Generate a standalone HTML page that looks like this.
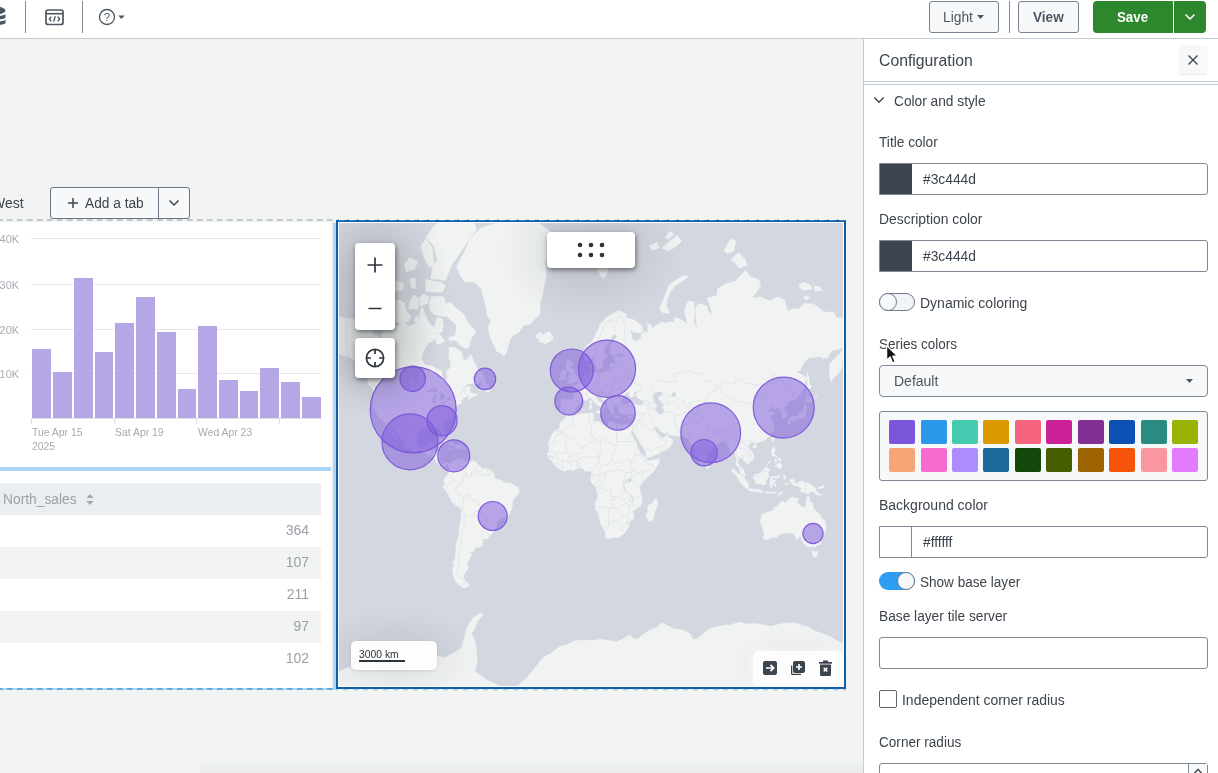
<!DOCTYPE html>
<html lang="en">
<head>
<meta charset="utf-8">
<title>Dashboard Studio - Configuration</title>
<style>
*{box-sizing:border-box;margin:0;padding:0}
html,body{width:1218px;height:773px;overflow:hidden;background:#f2f4f4;font-family:"Liberation Sans",Arial,sans-serif;color:#3c444d}
.abs{position:absolute}
#root{will-change:transform;position:relative;width:1218px;height:773px;overflow:hidden;background:#f2f4f4}
/* toolbar */
#toolbar{position:absolute;left:0;top:0;width:1218px;height:39px;background:#fff;border-bottom:1px solid #c3cbd4}
.vdiv{position:absolute;top:1px;width:1px;height:32px;background:#7f8a96}
.btn{position:absolute;top:1px;height:32px;border:1px solid #76828f;border-radius:3px;background:#f7f8fa;color:#3c444d;font-size:14px;line-height:30px;text-align:center;white-space:nowrap}
.t{position:absolute;white-space:nowrap;line-height:1;transform-origin:0 50%}
/* panel */
#panel{position:absolute;left:863px;top:39px;width:355px;height:734px;background:#fff;border-left:1px solid #c3cbd4}
.lbl{position:absolute;left:879px;font-size:14px;color:#3c444d;white-space:nowrap;line-height:16px;transform-origin:0 50%}
.inp{position:absolute;left:879px;width:329px;height:32px;border:1px solid #7d8997;border-radius:3px;background:#fff}
.inp.c{border-radius:0 3px 3px 0}
.inp .sw{position:absolute;left:0;top:0;width:32px;height:30px}
.inp .v{position:absolute;left:43px;top:0;line-height:30px;font-size:14px;color:#3c444d;transform-origin:0 50%;transform:scaleX(.985)}
.sws{position:absolute;width:26px;height:24px;border-radius:2px}
/* canvas */
.panelw{position:absolute;background:#fff}
.bar{position:absolute;background:#b5a7e6}
.grid{position:absolute;left:31px;width:290px;height:1px;background:#e6e8ea}
.ax{position:absolute;font-size:11.500px;transform:scaleX(.905);color:#a6abb0;white-space:nowrap;line-height:14px;transform-origin:0 50%}
.ay{position:absolute;left:-21px;width:40px;text-align:right;font-size:11.500px;color:#a6abb0;white-space:nowrap;line-height:14px;transform-origin:100% 50%;transform:scaleX(.95)}
.row{position:absolute;left:0;width:321px;height:32px}
.num{position:absolute;right:12px;top:-1px;line-height:32px;font-size:14px;color:#9ba0a6;transform-origin:100% 50%}
.ctl{position:absolute;background:#fff;border-radius:4px;box-shadow:1px 2px 4px rgba(0,0,0,.38),0 2px 10px rgba(0,0,0,.15)}
</style>
</head>
<body>
<div id="root">

<!-- ===== canvas area ===== -->
<div class="t" style="left:-8px;top:195px;font-size:14px;line-height:16px;color:#3c444d">West</div>
<div class="abs" style="left:50px;top:187px;width:140px;height:32px;border:1px solid #6b7785;border-radius:3px;background:#f7f8fa"></div>
<div class="abs" style="left:158px;top:187px;width:1px;height:32px;background:#6b7785"></div>
<svg class="abs" style="left:67px;top:197px" width="12" height="12" viewBox="0 0 12 12"><path d="M6 1v10M1 6h10" stroke="#3c444d" stroke-width="1.5" fill="none"/></svg>
<div class="t" id="addtab" style="transform:scaleX(0.98);left:85px;top:195px;font-size:14px;line-height:16px">Add a tab</div>
<svg class="abs" style="left:168px;top:199px" width="12" height="8" viewBox="0 0 12 8"><path d="M1.5 1.5L6 6l4.500-4.500" stroke="#3c444d" stroke-width="1.5" fill="none"/></svg>

<!-- dashed canvas edges -->
<svg class="abs" style="left:0;top:219px" width="864" height="2"><line x1="0" y1="1" x2="846" y2="1" stroke="#b0bbc6" stroke-width="1.6" stroke-dasharray="5.5 4.5" stroke-dashoffset="3"/></svg>
<div class="abs" style="left:0;top:688px;width:336px;height:2px;background:#a9d6f5"></div>
<svg class="abs" style="left:0;top:688px" width="864" height="3"><line x1="0" y1="1" x2="336" y2="1" stroke="#62abe2" stroke-width="2" stroke-dasharray="5.5 4.5" stroke-dashoffset="3"/><line x1="336" y1="1.800" x2="846" y2="1.800" stroke="#8fc0ea" stroke-width="1" stroke-dasharray="5.5 4.5" stroke-dashoffset="3"/></svg>

<!-- chart panel -->
<div class="panelw" style="left:0;top:222px;width:331px;height:245px"></div>
<div class="grid" style="top:238px"></div>
<div class="grid" style="top:284px"></div>
<div class="grid" style="top:329px"></div>
<div class="grid" style="top:373px"></div>
<div class="ay" style="top:232px">40K</div>
<div class="ay" style="top:278px">30K</div>
<div class="ay" style="top:323px">20K</div>
<div class="ay" style="top:367px">10K</div>
<div class="bar" style="left:32.0px;top:349px;width:18.700px;height:69px"></div>
<div class="bar" style="left:53.0px;top:372px;width:18.700px;height:46px"></div>
<div class="bar" style="left:74.0px;top:278px;width:18.700px;height:140px"></div>
<div class="bar" style="left:94.5px;top:352px;width:18.700px;height:66px"></div>
<div class="bar" style="left:115.3px;top:323px;width:18.700px;height:95px"></div>
<div class="bar" style="left:136.2px;top:297px;width:18.700px;height:121px"></div>
<div class="bar" style="left:157.2px;top:332px;width:18.700px;height:86px"></div>
<div class="bar" style="left:177.5px;top:389px;width:18.700px;height:29px"></div>
<div class="bar" style="left:198.2px;top:326px;width:18.700px;height:92px"></div>
<div class="bar" style="left:219.2px;top:380px;width:18.700px;height:38px"></div>
<div class="bar" style="left:239.5px;top:391px;width:18.700px;height:27px"></div>
<div class="bar" style="left:260.2px;top:368px;width:18.700px;height:50px"></div>
<div class="bar" style="left:281.1px;top:382px;width:18.700px;height:36px"></div>
<div class="bar" style="left:302.1px;top:397px;width:18.700px;height:21px"></div>

<div class="abs" style="left:31px;top:418px;width:290px;height:1px;background:#dfe2e5"></div>
<div class="abs" style="left:31px;top:418px;width:1px;height:6px;background:#dfe2e5"></div>
<div class="abs" style="left:114px;top:418px;width:1px;height:6px;background:#dfe2e5"></div>
<div class="abs" style="left:196px;top:418px;width:1px;height:6px;background:#dfe2e5"></div>
<div class="abs" style="left:279px;top:418px;width:1px;height:6px;background:#dfe2e5"></div>
<div class="ax" id="ax1" style="left:32px;top:425px">Tue Apr 15</div>
<div class="ax" id="ax1b" style="left:32px;top:439px">2025</div>
<div class="ax" id="ax2" style="left:114.500px;top:425px">Sat Apr 19</div>
<div class="ax" id="ax3" style="left:197.500px;top:425px">Wed Apr 23</div>

<!-- selection guides -->
<div class="abs" style="left:0;top:467px;width:331px;height:4px;background:#a9d6f5"></div>
<div class="abs" style="left:333px;top:223px;width:3px;height:465px;background:#a9d6f5"></div>

<!-- table panel -->
<div class="panelw" style="left:0;top:471px;width:331px;height:217px"></div>
<div class="row" style="top:483px;background:#ebeef0"></div>
<div class="t" id="ns" style="transform:scaleX(0.985);left:3px;top:491px;font-size:14px;line-height:16px;color:#9ba0a6">North_sales</div>
<svg class="abs" style="left:86px;top:493px" width="8" height="13" viewBox="0 0 8 13"><path d="M0.500 5L4 1l3.500 4zM0.500 8L4 12l3.500-4z" fill="#a3a8ae"/></svg>
<div class="row" style="top:515px"><span class="num">364</span></div>
<div class="row" style="top:547px;background:#f2f4f4"><span class="num">107</span></div>
<div class="row" style="top:579px"><span class="num">211</span></div>
<div class="row" style="top:611px;background:#f2f4f4"><span class="num">97</span></div>
<div class="row" style="top:643px"><span class="num">102</span></div>

<!-- map -->
<div class="abs" id="mapbox" style="left:336px;top:220px;width:510px;height:469px;border:2px solid #0d5fa8;background:#fff"></div>
<svg class="abs" style="left:336px;top:219px" width="510" height="2"><line x1="0" y1=".6" x2="510" y2=".6" stroke="#f2f4f4" stroke-width="1.2" stroke-dasharray="5.5 4.5" stroke-dashoffset="7"/></svg>
<div class="abs" id="map" style="left:339px;top:223px;width:504px;height:463px;overflow:hidden;background:#d3d7e0">
<svg class="abs" style="left:0;top:0" width="504" height="463" viewBox="339 223 504 463">
<defs>
<radialGradient id="halo"><stop offset="0" stop-color="#2a3038" stop-opacity=".2"/><stop offset=".45" stop-color="#2a3038" stop-opacity=".13"/><stop offset=".75" stop-color="#2a3038" stop-opacity=".05"/><stop offset="1" stop-color="#2a3038" stop-opacity="0"/></radialGradient>
</defs>
<path d="M320.7 309.9L331.3 313.9L346.0 318.2L355.8 319.6L362.3 316.3L367.2 314.9L372.0 318.7L378.6 317.3L388.3 321.9L390.0 324.6L388.3 326.3L396.5 326.3L399.8 324.6L403.0 321.9L409.5 326.3L416.1 323.2L418.5 324.1L419.3 316.3L421.8 306.3L425.0 313.9L427.5 319.6L429.1 323.2L434.0 327.6L437.2 317.3L442.1 318.7L443.3 325.4L442.1 331.8L438.9 333.0L435.6 331.8L434.0 337.7L432.4 341.5L428.3 343.0L425.8 346.9L422.6 352.8L421.4 359.2L425.0 364.8L432.4 366.3L437.2 369.7L441.7 370.6L442.1 376.2L444.6 380.7L447.0 380.1L447.4 376.2L446.5 371.5L450.3 367.7L451.1 361.7L448.7 358.6L449.5 352.1L448.7 347.3L455.2 347.6L461.7 352.1L462.5 358.6L465.0 360.8L468.2 358.6L470.7 354.4L474.7 363.3L478.0 369.2L482.1 373.4L485.0 378.8L482.9 380.4L478.0 383.5L471.5 383.5L467.4 384.0L464.1 387.0L460.9 390.9L462.5 390.0L466.6 386.5L471.0 387.0L469.8 390.2L470.7 393.3L476.4 394.2L478.0 392.6L476.4 395.4L472.3 397.2L468.2 399.5L468.2 397.2L470.7 394.9L466.6 396.1L463.3 398.4L460.9 400.6L461.7 402.8L459.3 404.1L455.2 405.9L454.9 408.2L452.7 410.3L451.9 413.4L452.4 416.8L449.5 419.4L447.0 420.8L443.8 423.3L443.1 426.2L444.6 430.3L445.4 433.6L444.9 435.9L443.4 435.9L442.1 433.6L440.8 430.8L440.8 428.6L438.9 427.1L436.4 427.7L434.0 426.3L430.7 426.5L430.4 428.8L427.5 428.4L422.6 427.9L419.3 429.9L417.2 431.7L417.4 434.8L416.4 439.9L416.9 443.4L418.5 446.0L420.1 447.4L422.1 448.2L425.8 447.5L427.5 446.5L428.3 443.4L432.4 442.5L434.0 442.7L433.2 446.0L432.4 448.6L431.1 452.0L435.6 452.3L438.9 452.3L440.2 453.7L439.4 457.9L439.5 460.7L441.3 463.2L443.8 464.0L445.7 462.8L448.7 463.2L449.8 464.3L449.0 466.5L447.8 464.5L446.2 463.8L444.9 466.5L442.6 465.6L440.5 464.8L438.9 462.8L435.9 461.7L435.9 460.4L433.2 457.0L431.5 456.7L427.5 455.3L424.2 452.8L421.8 451.6L418.5 452.5L414.4 451.0L410.4 449.4L406.3 447.2L403.8 444.6L404.0 442.0L402.2 439.0L399.8 436.3L397.3 433.6L395.7 431.4L392.9 429.0L391.6 425.2L388.8 423.9L388.7 426.2L391.6 430.8L394.1 434.5L396.0 438.1L397.3 439.9L396.0 439.0L393.2 436.7L392.8 434.1L389.5 432.3L389.7 429.9L387.0 427.1L384.9 422.3L382.6 419.4L379.2 418.4L377.1 414.2L376.1 411.8L374.0 408.2L373.2 406.3L373.4 402.8L373.7 397.2L373.7 393.3L372.5 388.0L375.3 388.2L376.1 390.2L375.6 386.5L372.9 384.0L368.8 381.4L367.2 377.5L363.9 372.0L362.3 369.2L359.0 364.8L356.6 360.8L353.3 360.2L350.9 358.0L347.6 356.1L341.9 355.4L337.8 352.8L334.6 355.4L331.3 357.0L328.0 353.8L324.8 360.2L318.3 364.8L311.7 360.2L306.8 348.7L306.8 337.7L302.0 335.4L311.7 331.8L304.4 324.1L311.7 316.3ZM374.7 388.0L371.2 387.0L366.7 382.5L368.8 382.0L372.0 384.0L374.5 386.5ZM475.6 331.8L471.5 337.7L469.8 343.3L468.2 348.7L465.0 348.0L460.1 345.1L456.0 340.4L449.5 340.4L448.7 337.7L455.2 335.8L456.0 331.8L456.8 325.4L451.9 321.0L447.0 316.3L442.1 316.3L435.6 314.9L430.7 311.4L429.1 303.6L430.7 296.9L437.2 296.3L443.8 296.9L445.4 303.6L450.3 302.5L455.2 307.9L460.1 311.4L464.1 314.9L466.6 321.0L470.7 326.3L474.7 329.7ZM385.1 321.4L390.0 323.7L396.5 322.3L403.8 322.8L409.5 321.0L411.2 316.3L406.3 311.4L404.6 303.6L399.8 299.8L393.2 302.0L388.3 299.2L383.5 302.5L381.8 308.9L384.3 313.9L391.6 315.4L385.1 318.7ZM372.0 306.3L373.7 296.9L378.6 292.1L384.3 294.0L386.7 299.8L381.0 306.3L376.1 310.4ZM476.4 229.9L471.5 235.6L466.6 243.1L458.4 255.5L451.9 264.0L445.4 280.5L437.2 279.1L430.7 279.1L432.4 268.0L437.2 259.8L434.0 246.1L425.8 237.8L434.0 226.4L445.4 217.4L461.7 213.3L474.7 223.9ZM445.4 285.8L442.1 292.1L432.4 292.1L425.8 290.9L425.8 279.1L432.4 281.2L442.1 282.5ZM434.0 265.6L429.1 266.4L424.2 257.2L420.9 246.1L425.8 238.9L432.4 248.0ZM403.0 289.0L396.5 291.5L390.0 290.3L385.1 285.8L386.7 279.8L396.5 280.5L403.0 283.9ZM416.1 289.0L411.2 287.8L409.5 279.1L415.2 278.4ZM420.1 306.3L427.5 303.6L428.6 296.3L422.6 294.0L419.3 299.2ZM408.7 308.9L417.7 308.9L418.5 298.1L413.6 295.1L409.5 300.9ZM413.6 321.0L419.3 323.2L420.1 318.2L416.1 316.3ZM434.0 336.2L437.2 344.4L442.1 342.6L444.6 341.5L442.1 337.7L438.9 333.0L435.6 333.8ZM376.9 282.5L383.5 285.2L386.7 277.0L381.8 273.3ZM406.3 271.8L414.4 269.6L417.7 261.5L409.5 258.1L404.6 264.0ZM456.8 266.4L465.0 250.9L469.8 238.9L481.3 227.6L494.3 223.9L510.6 211.9L526.9 210.5L539.9 223.9L551.3 232.3L556.2 237.8L548.1 250.9L544.8 264.0L546.5 275.5L544.0 285.8L542.4 295.1L539.9 303.6L539.9 313.9L535.0 318.7L530.2 324.1L523.6 325.4L518.8 332.6L513.9 335.0L509.8 339.6L508.2 345.9L505.7 353.8L504.1 355.7L500.8 353.1L496.7 351.1L494.3 345.9L491.9 340.7L489.4 333.8L488.3 327.6L491.0 321.0L487.0 314.9L486.5 308.9L484.5 300.9L481.3 289.0L474.7 281.9L465.0 281.9L460.1 275.5ZM535.9 335.8L539.9 332.2L542.4 334.6L546.5 333.0L549.7 331.8L552.2 335.8L553.6 337.7L551.3 340.4L545.6 343.7L541.6 342.2L538.8 341.5L539.9 338.5L536.7 338.1ZM449.8 464.3L451.9 462.8L452.7 461.0L454.4 460.4L458.4 458.4L459.3 458.0L459.3 460.4L461.7 459.5L462.0 458.5L465.0 460.9L468.2 461.0L471.5 461.5L474.7 460.9L476.4 462.8L478.0 464.5L480.4 467.0L482.9 468.6L486.1 468.8L488.6 469.4L491.0 470.6L492.7 471.9L494.3 475.5L494.3 478.1L496.7 479.2L498.4 479.5L502.4 480.8L504.1 482.5L507.3 483.0L510.6 483.1L513.0 484.4L515.5 486.2L518.3 486.9L519.1 490.2L518.8 493.1L516.3 495.6L514.7 498.1L513.0 499.8L512.2 503.1L512.2 507.4L510.9 510.8L509.3 514.3L507.5 516.8L504.9 516.9L502.4 518.4L499.2 520.0L496.7 522.0L496.6 526.0L495.1 527.8L493.5 531.6L491.0 533.9L488.6 537.4L486.1 539.2L482.9 538.8L480.6 537.4L482.6 541.4L482.1 545.5L479.6 547.1L474.7 547.5L474.3 551.4L469.8 551.8L472.0 555.1L469.8 557.3L469.0 560.7L465.8 563.0L468.2 566.6L468.5 567.8L465.8 571.5L463.3 575.4L464.3 579.0L464.6 580.4L469.5 585.3L467.4 586.5L465.0 587.9L461.7 586.8L458.4 584.2L455.2 580.6L453.5 575.4L452.7 569.0L454.4 564.9L452.7 564.2L455.2 558.4L455.5 554.0L456.0 549.6L456.0 544.4L457.3 540.4L459.1 535.4L459.3 529.7L460.1 525.1L460.9 520.5L461.2 515.2L461.4 511.7L461.2 508.7L458.4 506.5L455.2 504.8L451.6 501.5L450.3 498.1L447.8 494.0L445.7 489.8L443.4 488.2L443.3 485.7L445.4 483.8L444.1 482.2L443.9 480.0L445.4 477.9L445.4 476.8L447.4 476.0L447.8 474.3L449.5 471.9L449.6 469.4L449.0 466.5ZM566.2 415.8L567.2 415.6L570.9 416.8L574.2 416.4L577.4 414.6L580.7 413.8L587.2 413.4L592.1 412.8L593.7 413.4L592.9 415.8L593.7 418.4L592.4 419.8L594.5 421.0L597.3 421.6L600.7 422.7L601.9 424.6L605.1 426.2L607.6 426.3L608.4 424.3L608.7 422.5L611.7 421.6L613.6 422.7L616.5 423.9L619.8 424.6L623.1 425.2L624.7 424.4L627.1 424.3L628.4 424.8L631.5 424.6L632.7 428.0L631.7 431.2L629.9 429.3L628.9 427.3L630.4 431.2L631.2 433.6L632.8 437.2L634.0 439.9L635.9 441.6L636.6 444.2L636.6 446.8L638.6 448.6L639.9 452.7L642.6 454.8L645.1 457.0L646.4 457.9L646.4 459.4L648.3 461.2L652.4 460.0L655.7 459.9L659.4 458.9L659.1 461.4L658.1 463.7L655.7 467.8L654.0 471.1L650.8 474.3L647.5 476.8L645.1 479.2L643.4 481.3L641.3 483.3L640.2 485.7L639.4 488.7L640.2 490.7L640.2 493.1L641.8 495.9L642.1 501.5L642.0 504.0L639.4 506.5L636.1 508.2L633.7 510.8L632.5 511.7L633.5 515.2L633.7 518.7L629.6 521.4L629.1 522.3L629.4 526.0L627.1 528.8L625.5 531.6L622.3 535.0L619.8 536.8L617.7 537.4L612.5 537.6L608.4 539.0L606.0 538.0L605.6 534.9L605.5 532.5L603.5 528.8L602.7 527.1L600.6 523.2L599.4 517.8L599.3 515.2L597.0 510.8L595.0 508.2L595.0 504.8L596.2 500.6L598.1 496.4L597.5 493.1L595.8 488.2L595.4 486.6L593.7 484.6L591.3 482.2L590.1 479.5L591.3 477.6L591.3 475.1L591.8 473.0L590.5 471.5L589.7 470.9L587.2 471.2L584.8 471.1L583.1 468.3L580.7 467.9L578.2 468.3L575.8 469.3L572.5 470.6L570.9 470.1L567.6 470.1L563.6 471.2L561.1 470.2L557.9 467.6L555.4 466.1L554.1 463.7L552.2 461.2L551.3 460.4L548.6 458.0L548.4 456.2L547.3 454.2L548.9 452.0L549.2 448.6L549.4 446.0L548.1 443.4L549.4 439.9L551.3 437.2L552.2 434.5L554.6 431.2L557.1 429.9L559.5 428.0L560.0 426.2L559.8 424.3L561.1 421.8L563.4 420.2L565.2 418.8ZM656.2 498.1L658.0 504.0L656.5 507.4L654.9 512.6L652.7 520.1L649.5 521.4L647.0 517.8L646.4 514.8L648.0 511.7L647.5 507.4L649.1 504.8L652.4 503.6L654.0 500.6ZM561.3 413.4L560.3 409.9L561.5 405.0L560.8 400.6L562.8 399.1L566.8 399.5L570.1 399.5L572.9 399.7L573.8 397.2L573.8 393.8L572.2 390.9L568.5 389.5L568.1 387.8L570.9 387.0L573.4 387.5L572.9 384.8L575.8 385.8L578.2 383.5L578.6 381.4L581.2 380.4L582.6 378.3L583.6 376.2L586.4 374.8L588.8 374.2L590.0 373.4L589.7 369.2L589.0 365.7L589.7 364.5L592.9 362.7L592.6 366.3L593.4 367.7L592.1 369.7L591.8 371.2L593.4 372.6L593.7 373.4L595.8 372.6L597.8 372.0L599.1 373.7L602.4 372.6L606.0 371.2L607.6 372.3L608.4 371.5L610.0 369.7L610.0 365.4L611.2 363.0L612.6 362.7L614.1 364.8L615.1 364.8L615.6 360.8L614.1 359.6L614.1 358.0L616.5 357.0L621.4 356.7L625.0 355.7L622.3 353.4L618.2 354.1L615.7 355.4L612.5 355.4L610.5 352.8L610.8 348.7L610.4 345.1L612.5 342.2L615.7 338.5L617.0 336.5L615.7 334.6L612.0 335.0L610.5 339.6L609.2 342.6L606.0 345.1L604.0 348.7L603.8 353.1L606.4 355.4L605.6 357.7L603.0 360.2L602.7 364.8L601.9 367.1L599.1 369.2L597.0 369.5L596.5 366.8L595.2 362.7L594.1 358.6L593.1 356.7L591.3 358.9L588.8 361.4L587.2 361.7L585.1 359.6L584.1 355.4L583.9 350.4L585.6 346.9L588.0 344.4L591.3 342.6L593.7 338.5L596.2 333.8L598.6 328.4L600.2 324.1L602.7 321.9L606.0 317.7L610.0 315.4L614.1 312.9L617.9 310.9L621.4 311.4L626.3 314.4L625.5 317.3L629.6 319.1L634.5 320.1L641.8 326.3L643.0 330.5L641.0 333.0L636.9 332.6L632.0 331.3L628.8 329.7L631.2 333.8L632.5 339.6L636.1 341.5L637.7 340.0L641.0 339.2L641.0 335.4L644.3 331.8L647.5 333.0L648.0 323.2L646.7 322.8L651.6 325.4L650.8 330.5L654.0 326.7L662.2 322.3L665.4 323.2L670.3 321.9L673.6 322.8L675.2 317.3L680.9 319.6L685.0 321.9L688.3 324.1L685.8 317.3L684.7 311.4L687.5 302.0L688.3 300.9L694.0 302.0L694.5 311.4L694.0 321.9L696.1 327.6L693.2 332.6L697.2 327.6L696.4 321.0L695.6 308.9L698.0 303.6L702.9 304.7L707.0 306.3L709.5 313.9L711.9 316.3L711.1 308.9L707.0 298.1L716.8 295.7L717.6 289.0L725.8 283.9L735.5 281.2L745.8 270.3L750.2 277.0L758.4 279.1L760.8 285.8L751.8 298.1L760.0 296.9L769.8 300.9L777.9 296.9L784.4 299.8L787.7 311.4L792.6 308.9L799.1 308.9L804.0 303.6L813.8 304.2L820.3 308.9L824.4 312.4L833.3 311.9L836.6 317.7L844.8 318.7L852.9 316.3L869.2 321.0L885.5 333.8L869.2 346.9L867.6 347.6L861.0 349.4L852.9 355.4L846.4 355.4L841.5 361.7L842.0 367.1L839.9 371.2L836.6 375.6L834.2 376.7L831.2 381.4L829.4 376.2L829.8 370.6L829.6 364.8L831.7 361.7L836.1 357.0L839.5 354.1L842.3 350.4L843.1 346.9L837.4 349.7L831.7 350.1L828.4 357.0L823.6 358.6L820.3 356.7L813.8 357.3L808.9 357.7L804.0 362.4L799.9 370.6L796.2 371.5L799.9 374.0L804.0 375.6L806.3 378.0L804.8 382.7L804.5 387.8L801.6 392.6L797.5 397.2L792.6 401.1L790.8 400.4L788.8 402.2L787.2 405.0L784.9 407.2L783.6 408.2L785.1 410.3L786.7 413.4L786.7 416.4L785.3 417.6L782.0 418.6L781.8 415.4L782.3 412.4L779.5 411.3L780.0 408.2L778.4 407.4L774.2 409.3L773.4 405.2L769.8 408.8L767.7 409.9L769.6 412.2L772.7 411.8L775.6 412.8L772.2 415.0L770.3 417.4L772.7 421.4L774.5 424.8L773.0 426.3L774.7 428.0L773.8 430.3L771.4 433.6L770.3 435.8L768.1 437.4L765.7 439.5L761.9 441.1L758.4 442.2L755.6 443.0L755.1 444.6L754.6 442.5L752.3 442.3L749.7 443.7L748.3 446.8L749.4 449.4L752.3 452.0L753.8 456.2L753.8 459.5L750.2 461.4L749.4 462.8L746.9 464.3L746.6 462.0L744.5 461.0L742.5 458.7L740.3 457.5L739.6 456.2L738.8 457.9L738.5 460.4L737.5 463.2L739.3 464.8L739.6 466.6L741.6 467.5L743.7 469.4L744.3 471.9L744.5 473.8L745.6 476.1L744.3 476.0L740.9 473.8L739.6 471.1L739.3 468.6L737.2 465.8L736.0 464.8L736.4 462.0L736.7 458.7L735.5 455.3L734.9 451.1L733.1 451.1L731.1 452.3L729.5 451.6L729.7 448.6L728.2 445.5L726.2 443.4L725.4 440.7L723.3 441.1L720.9 442.0L717.6 442.9L717.3 444.8L714.7 446.0L709.9 450.8L706.7 452.8L706.5 456.5L705.9 461.5L704.6 463.2L703.3 463.8L702.1 465.2L700.2 462.3L698.9 459.0L697.7 457.0L696.4 453.7L695.3 450.3L694.5 446.8L694.5 443.4L693.6 442.0L693.2 443.4L691.2 443.9L688.3 441.1L689.9 439.9L687.5 438.8L685.0 436.7L684.2 435.6L680.1 435.8L676.0 436.1L670.3 435.2L668.7 433.2L667.6 432.5L664.6 433.4L661.4 431.7L658.9 429.3L657.6 427.1L655.3 426.5L654.0 427.5L654.5 429.9L655.7 431.7L657.6 433.6L658.6 436.7L659.3 434.3L659.9 436.3L659.7 437.5L663.0 437.9L664.6 437.4L667.1 434.5L667.7 433.9L667.9 436.7L671.3 438.8L673.3 440.7L671.5 444.2L669.9 446.8L667.9 448.6L665.4 450.3L660.9 452.0L655.7 454.8L649.1 457.4L646.7 457.5L645.9 454.5L645.4 451.1L642.6 446.8L639.7 442.5L637.7 438.1L635.3 434.5L632.8 430.8L632.7 428.0L631.5 424.6L632.8 421.8L633.8 418.4L634.3 415.8L634.8 414.2L632.5 413.8L630.7 415.0L628.0 414.4L625.7 413.8L623.6 414.8L620.5 413.4L618.7 410.7L619.5 408.6L618.5 407.2L620.6 406.1L623.1 405.0L626.7 404.6L630.1 402.8L632.8 402.8L635.3 404.4L637.7 405.2L641.0 405.0L643.4 403.9L643.4 401.3L640.5 399.5L636.9 396.8L635.6 395.2L637.7 392.6L639.7 390.9L636.9 391.2L633.2 392.8L632.8 394.5L635.3 395.2L633.3 396.1L631.2 397.5L630.2 397.0L628.8 395.2L630.6 393.5L628.0 392.6L625.8 392.6L624.2 395.6L622.6 398.4L621.4 400.2L621.1 401.7L621.6 403.7L623.1 404.6L620.6 405.0L619.3 406.1L618.2 405.4L614.9 405.4L614.1 406.7L613.0 406.1L613.0 408.4L613.8 410.3L614.9 411.3L613.3 411.6L613.6 412.8L613.1 414.4L612.3 414.4L611.2 413.8L610.4 411.8L610.8 410.7L609.5 409.7L608.4 407.8L607.4 406.1L607.6 403.5L606.0 401.7L603.5 400.2L601.1 398.4L599.9 396.1L598.1 396.1L598.1 394.5L596.0 395.2L595.8 397.7L597.8 399.3L598.9 401.7L601.9 403.0L602.2 404.1L605.1 405.9L606.0 406.9L603.8 406.3L602.9 407.8L603.7 409.3L602.7 410.5L601.4 411.3L601.9 409.3L601.4 407.2L599.4 405.9L598.9 405.4L597.0 404.4L595.7 403.3L593.7 401.7L592.6 399.5L591.6 398.1L590.3 397.5L588.0 398.8L585.9 400.4L583.6 399.7L581.5 399.9L580.7 401.7L581.0 403.0L579.4 404.1L577.1 405.4L575.3 408.2L576.1 409.7L574.7 412.0L572.5 413.8L568.6 414.0L567.0 415.2L565.5 414.4L564.4 413.0ZM566.5 383.8L570.1 383.2L574.2 382.2L578.1 380.9L577.1 380.1L578.6 377.2L576.3 376.2L575.8 374.5L573.8 371.7L573.2 369.2L570.9 367.7L572.5 364.2L572.9 363.0L569.3 362.7L570.9 359.9L567.6 359.9L566.5 363.3L565.7 366.0L566.8 369.2L568.0 371.2L570.6 370.9L570.7 374.0L570.9 375.1L568.5 375.3L569.0 377.5L567.3 379.4L570.6 380.4L569.0 380.9ZM566.0 378.3L565.7 375.3L566.8 372.0L565.7 370.0L562.3 370.0L561.9 372.3L559.5 372.9L559.8 375.3L560.6 377.0L559.0 378.8L560.3 380.1L562.8 379.4ZM593.7 259.8L601.9 250.9L611.7 247.0L619.8 250.9L614.9 259.8L610.0 264.0L606.0 275.5L602.7 278.4L598.6 271.8ZM649.1 246.1L657.3 242.0L658.9 248.0L652.4 249.9ZM662.2 248.0L670.3 241.0L676.9 235.6L681.8 241.0L673.6 248.0L667.1 250.9ZM665.4 237.8L670.3 231.1L673.6 234.5L668.7 238.9ZM659.7 308.9L662.2 312.4L669.5 313.4L666.3 306.3L667.1 299.2L670.3 292.1L675.2 285.8L683.4 280.5L688.3 276.3L685.0 275.5L675.2 280.5L668.7 285.8L665.4 295.1L663.0 300.9L660.6 306.3ZM730.6 259.8L738.8 252.7L745.3 259.8L746.9 265.6L738.8 268.0L733.9 261.5ZM724.1 250.9L730.6 238.9L735.5 241.0L733.9 250.9L727.4 253.6ZM799.1 283.9L804.0 282.5L810.5 285.2L812.1 289.0L804.0 290.3L799.9 287.8ZM813.8 285.8L820.3 287.1L821.9 290.3L815.4 290.9ZM804.0 295.7L809.7 297.5L807.3 299.8L804.0 298.6ZM807.3 372.6L808.9 377.5L809.4 384.0L811.3 386.5L808.9 390.2L809.7 393.3L807.3 393.8L807.3 389.0L807.3 382.7L806.8 377.5ZM804.5 403.9L806.0 400.2L806.8 395.2L808.9 397.2L812.6 397.9L813.0 399.9L809.7 402.8L805.6 401.7ZM806.1 404.4L807.3 408.2L805.6 411.3L805.3 415.4L804.0 417.4L802.0 418.0L799.1 418.2L798.8 420.4L797.2 420.4L795.8 418.2L792.6 418.8L789.3 419.4L789.3 418.2L791.8 416.4L796.7 416.2L798.8 413.4L799.6 412.4L801.6 412.8L803.2 410.3L804.0 407.2L804.5 404.6ZM789.3 419.8L790.6 421.4L790.1 424.3L788.8 425.2L788.0 423.3L787.4 421.4L788.5 420.0ZM791.8 419.6L795.0 419.0L794.7 420.4L792.6 421.8L791.6 420.8ZM773.0 435.9L774.7 436.3L773.7 439.9L772.7 441.6L771.6 439.9L772.2 437.5ZM753.0 446.3L754.3 444.9L756.6 445.1L755.9 447.2L754.3 448.2L753.0 447.5ZM706.2 462.3L708.2 464.5L709.1 467.0L707.8 468.3L706.4 468.6L705.9 466.1L706.0 464.0ZM772.4 447.7L775.0 447.9L775.1 451.1L774.0 452.5L774.2 455.0L777.9 457.0L777.6 457.7L775.6 456.5L772.5 455.7L771.9 454.0L771.1 451.6L772.1 449.4ZM774.7 467.0L777.1 464.3L780.4 462.5L782.0 465.3L781.5 467.8L780.2 469.1L777.9 467.8L777.1 466.1ZM774.7 459.0L776.5 459.5L776.9 462.0L776.0 463.2L775.1 461.2ZM778.4 457.9L780.4 458.0L780.7 460.4L779.5 461.7L778.7 460.0ZM766.8 464.7L768.1 463.2L770.6 459.9L770.1 461.7L768.1 464.2ZM753.5 476.0L754.4 475.1L757.2 474.2L760.0 473.2L762.4 470.9L764.1 469.4L766.2 467.0L767.7 468.3L770.1 469.9L768.1 471.4L767.7 473.5L769.6 476.8L767.8 477.3L767.3 479.5L765.7 480.8L765.7 483.8L764.9 484.9L762.6 484.9L760.8 483.8L757.9 483.9L755.4 483.0L755.1 480.5L753.5 478.1ZM731.1 469.3L734.7 469.9L736.7 472.2L739.3 474.3L741.7 475.6L744.5 477.9L745.0 480.0L746.3 481.7L748.6 483.3L748.4 487.9L746.3 488.0L742.5 484.9L740.4 482.5L738.5 478.9L736.7 475.6L734.2 473.5L731.5 470.6ZM747.3 489.5L748.9 488.2L752.7 489.2L756.4 488.9L759.3 489.7L762.4 491.0L762.3 492.6L758.4 492.1L752.7 491.2L749.4 490.5ZM771.1 477.1L772.7 476.3L776.3 476.8L779.9 475.6L778.7 477.7L773.0 477.6L771.4 479.7L773.4 480.0L776.8 479.9L774.7 481.3L773.8 483.0L775.5 484.1L776.3 485.7L775.1 486.6L773.5 484.1L772.7 482.8L772.1 484.9L772.1 487.5L770.6 487.4L770.6 484.1L769.4 483.0L770.3 480.4ZM789.3 479.7L792.6 479.2L794.5 479.9L794.7 482.5L796.7 483.8L800.4 480.8L805.6 482.6L811.3 484.6L813.5 487.1L816.2 488.4L816.9 489.3L815.2 489.7L817.4 492.5L821.6 495.3L817.0 494.9L814.6 492.8L811.3 491.0L809.4 492.5L808.9 493.5L805.6 493.3L802.4 491.6L800.7 492.1L800.3 489.8L802.0 489.5L800.7 487.4L796.7 485.6L793.2 484.9L791.0 483.1L793.4 482.2L791.4 482.0L789.3 480.7ZM764.9 492.1L769.8 492.0L776.3 492.0L776.0 493.0L769.8 493.0L765.2 493.1ZM777.1 495.3L779.5 493.1L783.1 492.1L782.0 493.6L778.7 495.1ZM783.6 475.1L785.3 476.0L785.6 477.9L784.4 479.7L783.8 477.6ZM784.4 483.3L789.0 483.3L788.5 484.3L784.8 484.1ZM817.9 487.4L821.9 486.6L824.0 485.3L823.9 487.1L820.3 488.5L817.9 488.2ZM761.1 516.1L761.8 514.8L764.9 513.1L769.8 511.7L773.8 510.0L775.1 507.0L777.1 507.0L777.9 505.3L780.4 502.3L782.8 501.3L784.9 503.0L786.9 503.0L787.7 499.8L789.0 498.8L791.8 498.1L791.9 496.9L795.8 498.4L798.8 498.4L797.5 500.6L796.7 503.1L799.1 504.7L802.7 507.2L805.3 507.4L806.4 504.0L806.6 499.8L807.4 496.4L808.2 495.9L809.7 499.4L810.2 502.1L812.6 503.1L813.0 505.7L814.1 509.6L817.0 511.7L818.7 513.4L821.6 517.8L824.4 520.5L825.5 523.2L826.2 527.1L825.2 531.6L823.6 535.4L822.3 537.4L820.8 541.4L820.3 544.4L817.0 545.2L814.4 547.7L812.1 546.1L809.7 547.1L805.6 545.7L803.5 543.2L802.9 540.6L801.1 540.6L801.6 539.0L800.4 534.7L799.1 537.4L797.5 539.2L796.8 539.2L794.5 535.4L793.6 533.7L789.7 532.5L786.1 532.9L781.2 534.1L777.9 535.4L777.3 537.2L771.4 537.2L768.1 539.4L764.9 539.2L763.2 538.0L764.4 533.5L763.2 530.3L761.9 525.6L760.3 522.5L761.0 519.6ZM811.7 551.1L814.6 552.0L817.5 551.6L817.4 554.4L816.2 556.9L814.6 557.5L812.6 555.1ZM282.4 688.8L331.3 681.3L339.4 671.0L355.8 664.7L372.0 658.7L388.3 661.7L404.6 665.9L412.8 655.9L420.9 655.9L432.4 655.9L445.4 657.6L453.5 653.2L461.7 647.9L465.0 635.8L466.6 629.2L469.8 623.0L473.9 617.2L481.3 612.7L482.9 615.3L477.2 621.0L475.6 627.1L471.5 633.6L474.7 640.5L476.4 650.5L477.2 661.7L474.7 671.0L486.1 679.8L502.4 687.2L510.6 688.8L518.8 685.0L526.9 677.7L535.0 667.8L543.2 657.6L551.3 653.2L559.5 646.4L567.6 644.4L575.8 640.5L583.9 640.5L592.1 640.5L600.2 639.5L608.4 640.5L616.5 641.9L624.7 638.1L629.6 634.9L632.8 638.1L637.7 639.5L641.0 635.8L649.1 630.5L657.3 627.1L662.2 623.0L668.7 626.3L673.6 628.8L681.8 630.1L686.6 631.4L689.9 633.6L693.2 639.5L696.4 639.1L701.3 635.8L706.2 631.4L711.1 627.9L719.2 626.3L725.8 625.0L730.6 625.0L738.8 622.2L746.9 624.2L755.1 623.4L763.2 625.0L771.4 626.3L779.5 624.2L787.7 623.0L795.8 623.0L804.0 625.9L808.9 627.1L813.8 630.5L820.3 633.1L828.4 635.8L836.6 640.5L844.8 644.4L852.9 647.9L854.5 655.9L849.6 667.8L844.8 685.0L852.9 688.8L869.2 688.8L869.2 753.8L282.4 753.8ZM437.4 441.8L441.3 439.7L445.4 439.9L449.5 442.0L452.7 443.9L454.9 444.8L451.9 445.3L449.1 445.4L450.0 443.9L447.8 442.5L444.6 441.6L442.1 441.1L439.7 441.3ZM454.5 447.9L456.8 445.3L458.9 445.5L461.7 445.6L464.3 447.5L461.7 448.1L459.3 449.1L457.6 448.2ZM448.2 447.9L451.4 448.2L451.1 448.9L448.7 448.9ZM466.3 447.7L468.7 447.9L468.5 448.6L466.3 448.6ZM479.1 390.0L482.1 382.7L485.3 379.9L484.8 384.0L488.6 385.3L489.9 390.2L488.6 392.3L485.3 391.4L484.5 389.7ZM596.0 411.3L601.2 410.7L600.4 414.0L596.2 412.2ZM589.2 405.0L591.6 405.0L591.4 408.8L589.5 409.3ZM589.8 400.8L591.3 400.6L591.1 404.1L590.0 403.5ZM614.1 416.2L618.7 416.8L618.2 417.6L614.3 417.0ZM628.4 417.4L632.2 416.0L631.2 417.6L629.1 418.2ZM813.0 398.4L817.9 394.9L817.0 395.6L813.5 398.8Z" fill="#f1f3f3" stroke="#f1f3f3" stroke-width=".6" stroke-linejoin="round"/>
<path d="M375.3 386.5L420.9 386.5L421.3 385.8L427.5 388.5L429.9 389.0M451.1 397.9L453.5 396.1L459.3 396.1L460.9 394.2L463.0 390.4L465.3 391.2L465.3 394.5L466.6 396.3M346.0 318.2L346.0 354.4L349.2 355.4L351.7 358.6L354.9 356.4L359.0 364.8L363.9 367.7L363.9 370.6M384.9 422.3L388.8 421.9L394.9 424.6L399.4 424.6L399.4 423.7L402.2 423.7L405.5 427.9L407.9 429.0L408.7 427.5L411.2 428.0L413.6 431.7L417.4 434.7M425.5 454.5L426.7 452.0L428.3 452.0L427.5 449.9L430.4 448.9L431.9 447.7M430.4 454.7L432.0 452.5M433.5 457.0L437.2 454.5L440.2 453.7M436.1 460.2L439.4 460.5M440.7 465.2L441.2 462.8M430.4 448.9L430.4 452.0L430.9 452.1M428.9 455.7L430.2 454.7L432.7 456.4M459.6 459.0L457.6 460.4L457.6 465.3L461.7 467.0L465.8 468.3L465.3 471.9L466.6 476.4M466.6 476.4L462.0 476.6L462.5 479.2L461.7 485.3M447.4 476.1L450.3 477.9L453.1 478.6M453.1 478.6L456.8 482.2L461.7 485.3M444.9 483.9L447.0 486.6L448.7 483.9L453.1 478.6M466.6 476.4L469.8 477.1L471.5 475.1L471.5 471.9L474.7 471.9L476.9 469.9M476.9 469.9L475.9 468.6L478.0 464.5M476.9 469.9L478.0 471.1L478.3 474.3L480.0 476.3L483.7 475.3M482.6 468.8L481.3 471.9L483.7 475.3M487.8 468.9L487.0 474.6M483.7 475.3L487.0 474.6L490.2 474.6L491.7 471.5M461.7 485.3L456.8 486.6L455.2 490.7L457.6 494.0L460.9 494.0L460.9 496.4L462.5 496.4M462.5 496.4L463.8 498.9L463.3 503.1L462.5 507.4M462.5 507.4L461.0 508.7M462.5 496.4L465.0 496.4L469.4 494.8L469.4 498.1L474.7 500.6L477.7 501.1L477.7 505.3L480.8 505.3L481.3 507.4L482.1 508.2L481.3 511.3L480.9 511.7M462.5 507.4L464.1 510.8L464.6 514.3L466.3 516.6M466.3 516.6L468.2 514.8L471.0 516.6L473.8 515.5M473.8 515.5L474.7 511.7L479.6 510.5L480.9 511.7M480.9 511.7L481.6 515.2L485.0 515.7L485.5 518.7L487.3 518.7L486.8 521.6M473.8 515.5L478.0 518.7L481.9 521.4L480.4 524.7L484.5 524.7L486.8 521.6M486.8 521.6L488.1 524.1L484.8 526.5L481.9 530.1M481.9 530.1L484.5 531.2L487.8 533.3L488.8 536.8M481.9 530.1L480.9 534.5L480.6 537.4M466.3 516.6L464.1 519.6L464.5 524.1L462.0 529.7L461.7 535.4L461.7 539.4L460.1 545.5L458.9 551.8L458.9 558.4L458.9 563.0L457.6 570.3L456.8 574.1L458.0 577.4L463.3 578.5L464.0 579.6M464.0 579.8L464.0 585.9M572.2 417.2L573.0 421.4L573.8 422.9L570.1 425.2L566.8 427.5L561.6 429.5L561.6 431.4M561.6 431.4L554.6 431.4M561.6 431.4L561.6 434.5L556.2 434.5L556.2 439.0L554.6 439.9L554.6 442.9L548.1 442.9M561.6 432.1L568.0 436.3L577.8 443.2L577.8 443.9L580.7 445.5L581.0 446.8L582.6 446.7M582.6 446.7L585.6 445.5L595.4 439.0M595.4 439.0L592.1 437.2L591.3 433.6L591.9 429.9L591.3 426.7M591.3 426.7L589.3 422.3L588.0 419.8L589.3 417.4L589.8 413.6M591.3 426.7L592.4 425.2L594.5 422.3L594.5 421.0M616.5 424.1L616.5 441.6M616.5 441.6L616.5 445.1L614.9 445.1L614.9 446.0M614.9 446.0L601.9 439.2L600.2 439.9L598.9 440.6L595.4 439.0M616.5 441.6L635.9 441.6M568.0 436.3L565.2 436.3L566.8 452.8L560.3 453.0L557.1 452.7L555.9 454.0M555.9 454.0L553.0 451.0L548.9 452.0M555.9 454.0L557.2 458.0M557.2 458.0L553.5 457.7L548.6 458.0M548.4 456.0L551.3 455.7L553.3 456.4L551.3 456.7L548.4 456.9M557.2 458.0L561.9 459.5L562.8 461.7M554.1 463.7L557.9 462.0L559.0 464.5M559.0 464.5L560.6 466.3L562.1 466.0L562.8 461.7M557.1 467.1L559.0 464.5M562.1 466.0L563.6 471.2M551.3 460.4L553.5 459.2L553.5 457.7M571.2 470.1L571.4 462.8L571.2 462.5M562.8 461.7L566.8 461.4L571.2 462.5M566.8 461.4L568.5 457.5L572.5 455.0L576.1 453.7M576.1 453.7L579.5 458.2L579.7 458.9M571.2 462.5L571.2 460.4L575.8 460.2L577.3 460.4M577.8 468.4L576.8 464.5L575.8 460.2M578.4 468.3L578.4 463.7L577.3 460.4L579.7 458.9M580.2 467.9L580.4 463.7L581.7 459.2M579.7 458.9L581.7 459.2M581.7 459.2L582.3 456.2L587.2 457.0L590.5 457.4L597.0 456.2L598.0 455.9M576.1 453.7L581.5 453.0L582.6 450.6L582.6 446.7M598.0 455.9L601.1 450.6L601.1 444.2L600.2 439.9M614.9 446.0L614.9 452.5L612.5 455.3L611.7 457.5L613.1 460.4M613.1 460.4L610.0 462.8L606.0 465.3L601.1 466.1M601.1 466.1L598.6 462.0L600.2 460.4L598.9 457.4L598.0 455.9M589.7 470.7L591.8 467.8L594.5 467.5L596.2 464.5L598.3 460.4L598.9 457.4M601.1 466.1L599.4 469.4L601.9 474.8M591.8 474.6L597.5 474.8L601.9 474.8M593.9 484.8L596.2 482.0L599.3 481.3L599.1 476.4L597.5 474.8M591.8 476.8L594.2 476.8L594.2 474.6M613.1 460.4L614.6 464.2L620.5 470.1M620.5 470.1L615.7 470.1L612.5 471.5L607.6 470.2L606.1 472.7L601.9 474.8M606.1 472.7L604.8 478.4L602.2 482.0L601.7 484.9L599.4 486.2L597.0 485.9L595.7 487.9M614.6 464.2L618.2 462.0L621.4 463.0L624.7 461.7L628.8 458.9L629.6 461.5L631.2 462.8M631.2 462.8L631.7 460.7L633.7 457.9L635.3 454.8M635.3 454.8L636.1 450.3L638.7 448.6M635.3 454.8L639.4 454.3L642.6 455.7L644.9 457.9M644.9 457.9L643.9 460.4L645.9 460.4L645.6 461.2L647.5 463.7L652.4 465.3L654.0 465.3L649.1 470.2L644.3 471.7L642.6 472.0M645.9 460.4L646.4 459.5M642.6 472.0L640.2 472.7L637.7 472.5L634.5 471.2L634.3 470.9M634.3 470.9L632.8 469.6L631.2 467.8L629.6 465.6L631.2 464.3L631.2 462.8M642.6 472.0L642.6 479.9L643.4 481.2M634.3 470.9L631.9 471.5L631.2 472.2L632.0 476.4L631.2 478.1L631.1 480.0M631.1 480.0L637.1 483.3L637.3 484.1L639.7 486.1M631.2 472.2L626.3 472.4L626.0 472.7L623.9 471.1L620.5 470.1M626.0 472.7L626.3 474.8L624.0 477.6L624.0 480.7M624.0 480.7L625.5 480.0L631.1 480.0M624.0 480.7L623.1 482.8L623.4 485.6M625.5 480.0L626.0 482.2L625.4 484.1L623.7 485.6M623.1 482.8L626.0 482.2M626.0 492.0L629.4 493.8M629.4 493.8L631.2 494.1M632.4 497.3L636.9 497.4L641.7 495.6M595.7 487.9L597.3 488.0L602.9 488.0L603.5 490.3L607.6 489.8L607.6 491.5L611.3 490.3L611.3 496.8L614.9 496.3M614.9 496.3L615.4 496.9L617.0 496.9L619.8 498.1L622.3 499.4L624.4 500.4L624.4 498.4L622.3 495.6L622.4 493.5L626.0 492.0M614.9 496.3L614.9 499.8L611.7 499.8L611.7 505.2L613.9 507.6M595.0 507.0L598.6 507.2L606.0 507.2L610.7 508.2L613.9 507.6L617.0 507.9M610.0 508.7L608.4 515.2L608.4 520.1L608.4 526.7L604.2 527.3L602.7 527.1M608.4 520.1L609.7 524.0L613.3 521.0L617.4 521.8L619.8 518.2L623.7 515.5M623.7 515.5L621.0 512.6L618.2 509.8L617.0 507.9M617.0 507.9L619.8 508.1L622.9 504.8L625.4 504.1M625.4 504.1L629.6 506.0L629.4 510.8L628.6 513.9L626.8 515.9M623.7 515.5L626.8 515.9M626.8 515.9L628.0 519.6L628.0 523.8L629.4 524.0M625.4 504.1L625.0 502.8L629.9 501.5L629.4 497.3L630.1 494.1L629.4 493.8M629.9 501.5L632.0 502.3L634.2 505.7L633.3 506.7L631.7 505.3L632.2 501.8M619.8 528.9L622.3 527.3L623.7 529.1L622.3 530.8L620.3 530.3L619.8 528.9M626.3 522.1L628.0 522.3L628.0 523.8L626.3 524.5L626.0 523.2L626.3 522.1M561.5 403.0L565.2 403.5L564.4 407.8L563.9 411.3L563.7 413.0M572.9 399.7L576.9 401.3L581.0 402.0M594.5 358.6L596.2 352.1L595.7 343.3L598.6 339.6L601.1 332.6L605.1 323.2L609.2 321.0M609.2 321.0L614.1 326.3L614.9 333.8M609.2 321.0L617.4 321.0L618.2 316.3L622.3 316.3L623.1 320.1M623.1 320.1L624.7 326.7L623.9 338.5L627.1 345.9L621.4 353.8M621.4 357.0L620.6 363.3L621.8 367.1L626.0 368.9L626.3 371.5L628.8 375.3L627.1 378.3L631.5 379.1L633.7 383.0L637.7 384.3L641.0 385.0L640.7 389.0L638.1 390.9M612.0 388.0L614.9 382.7L614.3 379.9L616.5 379.1L625.5 380.7L627.1 378.3M612.0 388.0L615.7 389.2L619.2 388.2L621.8 394.9L624.0 395.4M619.2 388.2L623.1 389.0L624.7 392.8M614.3 379.9L614.1 373.7L617.4 372.6L619.2 368.6L621.8 367.1M608.1 372.3L613.0 372.3L614.1 373.7M613.0 372.3L613.0 370.6L610.4 369.7M610.0 367.4L616.5 366.6L619.2 368.6M615.4 362.0L620.5 363.0M598.9 373.7L599.8 378.8L600.2 381.4M600.2 381.4L595.5 383.2L598.3 387.0L597.0 390.2L591.4 390.2L588.2 390.0L589.2 386.5L585.7 385.3L585.6 381.4L587.2 378.0L587.5 375.3M600.2 381.4L606.0 384.3L612.0 386.3L612.0 388.0M606.0 384.3L603.5 387.5L603.7 389.0L598.3 387.0M603.7 389.0L602.0 391.9L598.1 392.6L598.1 394.5M612.0 388.0L610.0 393.3L606.4 394.0L602.7 392.6L602.0 391.9M610.0 393.3L612.8 397.2L612.3 402.2L610.0 402.8L607.4 403.0M612.8 397.2L619.8 398.4L622.4 399.1M612.3 402.2L613.3 404.4L618.8 403.5M613.3 404.4L610.0 405.2L608.4 407.8M612.8 397.2L610.7 396.3L608.9 393.5M606.4 394.0L606.8 396.3L607.4 399.5L606.0 401.7M598.1 394.9L600.7 394.9L602.7 392.6M601.6 395.6L601.9 397.9L604.5 400.6L606.0 401.7M601.6 395.6L606.8 396.3M588.2 390.0L585.6 393.3L587.2 394.0L586.9 396.5L588.2 398.8M587.2 394.0L589.7 392.8L592.8 392.6L595.7 391.4L598.1 392.6M591.4 390.2L592.8 392.6M585.7 385.3L582.6 384.0L580.0 381.2M585.6 381.4L585.3 382.0L585.7 385.3M581.3 380.4L585.6 380.4L585.6 381.4M589.8 370.9L591.9 371.2M641.0 399.7L646.7 401.1L651.6 403.3L654.9 403.3M643.4 403.9L646.7 404.8L649.1 404.4L651.6 403.3M646.7 404.8L648.8 407.8L647.5 408.4L648.3 411.8L648.8 413.0M649.1 404.4L651.6 408.2L651.6 409.5M648.8 413.0L644.9 413.0L641.0 413.8L636.1 414.0L634.8 415.4M618.8 403.5L618.2 405.2M618.8 403.5L621.4 402.8M644.9 413.0L643.0 417.8L639.0 420.6M639.0 420.6L634.5 422.1M639.0 420.6L639.7 422.9L636.1 424.3L637.7 426.2L636.9 427.1L635.3 428.0L632.8 428.4M639.7 422.9L644.3 425.0L648.7 428.6L651.6 428.8L653.2 429.9L654.7 429.9M651.6 428.8L653.7 427.1M648.8 413.0L650.0 415.4L650.8 417.4L650.0 419.4L651.1 421.0L653.7 423.7L654.0 426.2L654.9 427.1M633.8 421.0L633.7 424.3L632.8 428.0M631.5 424.6L632.7 428.0M633.0 421.2L633.8 421.0L635.5 419.0L634.5 418.2M645.6 451.3L646.2 449.6L648.2 449.6L652.4 450.3L654.9 448.2L660.6 446.8M660.6 446.8L665.4 445.1L666.6 441.6L665.8 440.4M665.8 440.4L661.5 440.0L659.9 437.7M665.8 440.4L667.1 437.9L667.6 436.5M660.6 446.8L662.4 450.8M658.6 436.8L659.3 437.0M663.7 412.8L667.1 411.3L670.3 412.0L675.6 414.2L675.6 416.2M675.6 416.2L674.6 419.4L674.9 424.3L676.5 424.4L675.1 427.5L677.7 428.2L679.0 432.3L676.4 435.9M648.8 407.8L651.6 409.5L654.0 407.8L655.5 410.5M675.6 416.2L680.9 414.8L684.2 412.6L686.6 413.4L691.5 410.5L692.5 414.0L697.9 413.0M697.9 413.0L692.3 415.4L691.5 419.4L689.1 421.4L688.8 423.5L684.0 425.4L683.9 427.5L677.7 428.2M697.9 413.0L702.6 416.4L696.4 421.4L698.7 422.7L697.2 425.2L694.8 428.0L690.7 430.8L689.2 432.3L690.2 435.0L691.5 437.4L687.9 437.5L687.0 438.6M702.6 416.4L704.6 422.3L707.8 426.7M707.8 426.7L712.7 429.2L716.0 430.8L719.4 431.0M707.8 426.7L706.4 429.3L711.1 431.9L715.7 433.4L719.4 433.8L719.4 431.0M719.4 431.0L720.5 430.8L722.0 430.5L725.1 431.2L725.9 432.8L722.2 433.2L720.7 432.1L720.5 430.8M725.1 431.2L729.0 428.4L732.3 428.2L734.4 430.5M734.4 430.5L731.0 434.5L729.3 438.1L727.9 438.1L727.4 441.6L726.7 442.9L726.2 443.9M719.4 433.8L720.5 433.9L722.2 434.5L722.2 435.8L726.4 436.3L724.5 438.1L724.8 439.9L726.2 441.6L726.7 442.9M719.4 433.8L719.4 436.5L720.5 437.5L720.4 439.5L721.0 441.6M734.4 430.5L736.7 431.7L736.7 434.8L734.9 437.4L737.0 439.5L737.7 441.6L740.8 442.9M740.8 442.9L739.0 444.6L735.5 445.6L735.1 447.7L736.7 451.5L735.9 453.7L737.5 457.0L738.1 459.0L736.8 461.7M740.8 442.9L742.2 440.9L743.7 440.9L745.3 440.4L747.4 439.3L749.7 440.2L750.2 442.2L751.8 442.5M742.2 440.9L745.3 444.2L746.9 446.8L750.2 451.1L751.2 454.2M739.0 444.6L740.4 449.4L742.2 448.6L745.3 448.1L746.6 451.1L747.9 454.7M743.5 459.2L742.7 456.0L745.3 454.7L747.9 454.7L751.2 454.2L751.0 458.2L748.6 460.4L746.1 461.4M739.0 467.8L740.6 469.1L742.2 468.3M754.4 475.1L755.1 476.8L758.4 476.0L761.6 476.0L763.2 473.5L764.1 471.4L767.3 471.4M805.6 482.6L805.6 493.3M761.6 470.9L763.2 470.4L763.6 471.4M718.9 386.0L724.1 395.6L731.5 397.9L733.9 401.3L740.4 401.5L746.9 403.7L755.1 401.3L758.4 398.8L758.2 396.1L764.9 393.1L771.1 392.1L767.8 389.0L764.9 384.3M718.9 386.0L725.8 382.0L735.5 384.0L736.0 378.8L742.1 380.7L743.7 383.2L750.2 384.0L756.7 385.8L761.6 383.5L764.9 384.3M764.9 384.3L770.3 383.2L773.0 375.3L780.4 376.2L783.6 384.0L789.0 386.8L789.3 389.7L795.4 388.2L792.6 396.1L789.7 396.5L788.7 402.0M788.7 402.0L784.4 403.9L782.5 403.5L778.4 407.4M781.5 411.8L785.1 410.1M651.6 388.0L652.4 384.0L655.2 383.5L658.6 379.6L665.4 382.0L671.2 381.2L676.0 382.0L674.4 374.0L676.9 373.4L681.8 372.0L688.3 369.7L691.5 372.9L695.6 373.4L701.0 372.6L706.2 382.0L711.9 381.4L714.8 385.0L718.1 386.0M651.6 388.0L653.2 389.5L654.4 392.6L656.0 392.8M718.1 386.0L715.5 388.0L715.2 391.2L711.1 390.9L709.9 394.9L706.2 396.1L706.5 402.4M661.4 403.5L667.1 404.4L667.1 396.1L671.3 394.7L675.2 397.7L681.6 399.1L683.4 402.0L684.2 404.8L686.6 405.0L690.7 402.6L691.5 402.2M691.5 402.2L695.6 401.7L696.9 400.2L706.5 402.4M706.5 402.4L701.0 405.2L696.1 407.6M696.1 407.6L691.5 407.4L688.8 406.9L690.7 405.0L691.5 402.2M696.1 407.6L697.9 413.0M667.1 404.4L668.7 404.4L671.3 401.3L673.6 402.4L676.7 404.8L677.7 407.2L680.9 409.5L684.2 412.6M684.2 412.6L686.6 410.3L686.3 408.2L688.8 406.9" fill="none" stroke="#dde0e4" stroke-width=".7" stroke-linejoin="round"/>
<path d="M653.2 394.7L656.5 392.3L660.6 391.9L662.5 393.1L662.2 395.6L659.4 396.1L658.9 397.7L657.6 397.0L658.9 400.2L661.4 401.1L661.4 403.9L664.6 405.0L662.2 407.2L663.5 409.3L663.7 412.8L661.4 413.8L658.9 414.0L657.3 412.6L655.7 410.7L655.7 408.2L656.5 406.5L657.8 406.5L656.5 405.0L654.9 402.8L653.2 400.6L653.2 398.4L652.4 396.5ZM671.2 396.1L672.8 392.6L675.2 392.3L676.0 394.9L673.6 397.2ZM627.6 479.2L629.6 477.7L631.5 478.9L630.9 481.7L628.8 482.8L627.6 481.3ZM623.4 484.1L624.4 485.7L626.2 491.8L625.5 492.3L623.7 488.2L623.1 484.9ZM631.2 494.1L632.4 497.3L633.2 501.5L632.2 501.8L631.5 498.1L630.9 494.8ZM425.8 392.1L430.7 389.0L434.8 387.3L437.7 390.2L438.1 392.6L434.0 392.6L429.9 391.9ZM432.7 403.5L434.8 403.3L435.3 399.5L437.2 394.9L436.4 393.8L434.0 394.9L432.4 397.2L432.7 400.6ZM438.1 393.8L443.0 393.8L445.4 396.5L442.6 400.2L441.3 400.2L439.7 398.4L440.0 395.6ZM440.0 403.5L443.8 403.7L447.0 401.3L446.7 400.6L443.0 401.5L440.5 402.4ZM445.7 399.9L450.3 399.9L451.4 398.4L449.5 398.1L446.2 399.1ZM415.2 382.7L418.5 382.7L416.9 374.8L414.4 374.0ZM372.9 333.8L380.2 337.7L383.5 331.8L378.6 329.7L373.7 330.5ZM385.1 352.1L391.6 351.1L397.3 345.9L394.9 345.9L388.3 348.7L385.1 350.4Z" fill="#d3d7e0"/>
<g fill="#7b56db" fill-opacity=".5" stroke="#7b56db" stroke-opacity=".95" stroke-width="1.2">
<circle cx="413.2" cy="409.8" r="43"/>
<circle cx="412.7" cy="378.7" r="12.7"/>
<circle cx="442" cy="420.7" r="15.1"/>
<circle cx="410" cy="441.9" r="28"/>
<circle cx="453.8" cy="455.8" r="16"/>
<circle cx="485" cy="378.9" r="10.7"/>
<circle cx="492.7" cy="516" r="14.5"/>
<circle cx="571.8" cy="370.5" r="21.5"/>
<circle cx="607" cy="368.7" r="28.6"/>
<circle cx="568.8" cy="401.1" r="13.9"/>
<circle cx="618" cy="412.9" r="17.3"/>
<circle cx="710.7" cy="432.8" r="29.9"/>
<circle cx="704.1" cy="452.7" r="13.2"/>
<circle cx="783.7" cy="407.6" r="30.5"/>
<circle cx="813" cy="533.5" r="10.1"/>
</g>
<ellipse cx="591" cy="250" rx="95" ry="75" fill="url(#halo)" opacity=".6"/>
<ellipse cx="375" cy="296" rx="78" ry="105" fill="url(#halo)"/>
<ellipse cx="375" cy="358" rx="62" ry="62" fill="url(#halo)" opacity=".7"/>
<ellipse cx="394" cy="656" rx="88" ry="50" fill="url(#halo)" opacity=".45"/>
<ellipse cx="798" cy="668" rx="70" ry="40" fill="url(#halo)" opacity=".3"/>
</svg>
<!-- controls -->
<div class="ctl" style="left:16px;top:20px;width:40px;height:87px"></div>
<div class="ctl" style="left:16px;top:115px;width:40px;height:40px"></div>
<svg class="abs" style="left:16px;top:20px" width="40" height="136" viewBox="0 0 40 136">
<path d="M20 14.500v15M12.500 22h15M13.500 65.500h13" stroke="#2d343c" stroke-width="1.7" fill="none"/>
<circle cx="20" cy="115" r="8.6" stroke="#2d343c" stroke-width="1.7" fill="none"/>
<path d="M20 106.400v4.500M20 123.600v-4.500M11.400 115h4.500M28.600 115h-4.500" stroke="#2d343c" stroke-width="1.7" fill="none"/>
</svg>
<div class="ctl" style="left:208px;top:9px;width:88px;height:36px"></div>
<svg class="abs" style="left:208px;top:9px" width="88" height="36" viewBox="0 0 88 36"><g fill="#2d343c"><circle cx="33" cy="13" r="2.300"/><circle cx="44" cy="13" r="2.300"/><circle cx="55" cy="13" r="2.300"/><circle cx="33" cy="23" r="2.300"/><circle cx="44" cy="23" r="2.300"/><circle cx="55" cy="23" r="2.300"/></g></svg>
<!-- scale -->
<div class="abs" style="left:12px;top:418px;width:86px;height:29px;background:#fdfdfd;border-radius:5px;box-shadow:0 1px 3px rgba(0,0,0,.12)"></div>
<div class="t" id="scale" style="left:19.500px;top:424.500px;font-size:11px;line-height:12px;color:#2d343c;transform:scaleX(.94)">3000 km</div>
<div class="abs" style="left:20px;top:437px;width:46px;height:2px;background:#2d343c"></div>
<!-- actions -->
<div class="abs" style="left:414px;top:428px;width:90px;height:36px;background:#fdfdfd;border-radius:6px;box-shadow:0 0 8px rgba(255,255,255,.6)"></div>
<svg class="abs" style="left:414px;top:428px" width="90" height="36" viewBox="0 0 90 36">
<g fill="#3c444d">
<path d="M12 10h10a2 2 0 0 1 2 2v10a2 2 0 0 1-2 2H12a2 2 0 0 1-2-2V12a2 2 0 0 1 2-2z"/>
<path d="M42 10h8a2 2 0 0 1 2 2v8a2 2 0 0 1-2 2h-8a2 2 0 0 1-2-2v-8a2 2 0 0 1 2-2z"/>
<path d="M38 14.500h1.300v8.200h8.700V24h-8.700a1.300 1.300 0 0 1-1.300-1.300z"/>
<path d="M67 13.500h11v10a1.500 1.500 0 0 1-1.500 1.500h-8a1.500 1.500 0 0 1-1.500-1.500z"/>
<path d="M66 11h13v1.700H66z"/><path d="M70 9.500h5v2h-5z"/>
</g>
<path d="M13 17h7.500M17.500 13.800l3.200 3.200-3.200 3.200" stroke="#fff" stroke-width="1.700" fill="none"/>
<path d="M46 13v6M43 16h6" stroke="#fff" stroke-width="1.700" fill="none"/>
<path d="M70.700 16.800l3.600 3.600M74.300 16.800l-3.600 3.600" stroke="#fff" stroke-width="1.500" fill="none"/>
</svg>
</div>

<!-- bottom shadow hint -->
<div class="abs" style="left:200px;top:758px;width:663px;height:15px;background:linear-gradient(to bottom,rgba(60,68,77,0),rgba(60,68,77,.05))"></div>

<!-- ===== top toolbar ===== -->
<div id="toolbar">
<svg class="abs" style="left:0;top:6px" width="8" height="22" viewBox="0 0 8 22"><g fill="#4d5661"><ellipse cx="-5" cy="4.500" rx="10.500" ry="4"/><path d="M-15 8c2 3 18 3 20.500 0v3.500c-2.500 3-18.500 3-20.500 0z"/><path d="M-15 13.500c2 3 18 3 20.500 0V17c-2.500 3-18.500 3-20.500 0z"/></g></svg>
<div class="vdiv" style="left:25px"></div>
<svg class="abs" style="left:45px;top:9px" width="19" height="17" viewBox="0 0 19 17"><rect x="1" y="1" width="17" height="14.500" rx="2" fill="none" stroke="#4d5661" stroke-width="1.700"/><path d="M1 4.700h17" stroke="#4d5661" stroke-width="1.600"/><path d="M6.300 7.800L4.300 10l2 2.200M12.700 7.800l2 2.200-2 2.200M10.300 7.300L8.700 12.700" stroke="#4d5661" stroke-width="1.300" fill="none"/></svg>
<div class="vdiv" style="left:82px"></div>
<svg class="abs" style="left:98px;top:8px" width="28" height="18" viewBox="0 0 28 18"><circle cx="9" cy="9" r="7.500" fill="none" stroke="#4d5661" stroke-width="1.300"/><text x="9" y="13" text-anchor="middle" font-family="Liberation Sans,Arial,sans-serif" font-size="11.500" fill="#4d5661">?</text><path d="M20.300 7.600h6.400L23.500 11z" fill="#4d5661"/></svg>

<div class="btn" style="left:929px;width:70px"></div>
<div class="t" id="light" style="transform:scaleX(0.985);left:943px;top:9px;font-size:14px;line-height:16px;color:#4d5661">Light</div>
<svg class="abs" style="left:977px;top:15px" width="7" height="4" viewBox="0 0 7 4"><path d="M0 0h7L3.500 4z" fill="#4d5661"/></svg>
<div class="vdiv" style="left:1009px"></div>
<div class="btn" style="left:1018px;width:61px"></div>
<div class="t" id="view" style="transform:scaleX(0.97);left:1033px;top:9px;font-size:14px;line-height:16px;font-weight:bold;color:#4d5661">View</div>
<div class="abs" style="left:1093px;top:1px;width:80px;height:32px;background:#2c872d;border-radius:4px 0 0 4px"></div>
<div class="abs" style="left:1174px;top:1px;width:32px;height:32px;background:#2c872d;border-radius:0 4px 4px 0"></div>
<div class="t" id="save" style="transform:scaleX(0.95);left:1117px;top:9px;font-size:14px;line-height:16px;font-weight:bold;color:#fff">Save</div>
<svg class="abs" style="left:1184px;top:13px" width="12" height="8" viewBox="0 0 12 8"><path d="M1.500 1.500L6 6l4.500-4.500" stroke="#fff" stroke-width="1.500" fill="none"/></svg>
</div>

<!-- ===== configuration panel ===== -->
<div id="panel"></div>
<div class="t" id="cfg" style="transform:scaleX(0.985);left:879px;top:52px;font-size:16px;line-height:18px;color:#3c444d">Configuration</div>
<div class="abs" style="left:1179px;top:45px;width:28px;height:29px;background:#f7f8fa;border-radius:3px;box-shadow:0 1px 1px rgba(60,68,77,.12)"></div>
<svg class="abs" style="left:1187px;top:54px" width="12" height="12" viewBox="0 0 12 12"><path d="M1.500 1.500l9 9M10.500 1.500l-9 9" stroke="#3c444d" stroke-width="1.300" fill="none"/></svg>
<div class="abs" style="left:864px;top:81px;width:354px;height:1px;background:#c3cbd4"></div>
<div class="abs" style="left:864px;top:84px;width:354px;height:1px;background:#c3cbd4"></div>
<svg class="abs" style="left:873px;top:96px" width="12" height="8" viewBox="0 0 12 8"><path d="M1.300 1.500L6 6.200l4.700-4.700" stroke="#3c444d" stroke-width="1.400" fill="none"/></svg>
<div class="lbl" id="cas" style="transform:scaleX(0.98);left:894px;top:93px">Color and style</div>

<div class="lbl" id="l1" style="transform:scaleX(0.977);top:134px">Title color</div>
<div class="inp c" style="top:163px"><div class="sw" style="background:#3c444d"></div><div class="v">#3c444d</div></div>
<div class="lbl" id="l2" style="transform:scaleX(0.992);top:211px">Description color</div>
<div class="inp c" style="top:240px"><div class="sw" style="background:#3c444d"></div><div class="v">#3c444d</div></div>

<div class="abs" style="left:879px;top:293px;width:36px;height:18px;border:1px solid #6f7b88;border-radius:9px;background:#f2f4f6"></div>
<div class="abs" style="left:879px;top:293px;width:18px;height:18px;border:1px solid #6f7b88;border-radius:9px;background:#f7f8fa"></div>
<div class="lbl" id="l3" style="left:920px;top:295px">Dynamic coloring</div>

<div class="lbl" id="l4" style="transform:scaleX(0.965);top:336px">Series colors</div>
<div class="abs" style="left:879px;top:365px;width:329px;height:32px;border:1px solid #7d8997;border-radius:4px;background:#f7f8fa"></div>
<div class="lbl" id="l5" style="left:894px;top:373px;color:#4d5661">Default</div>
<svg class="abs" style="left:1186px;top:379px" width="7" height="4" viewBox="0 0 7 4"><path d="M0 0h7L3.500 4z" fill="#4d5661"/></svg>
<div class="abs" style="left:879px;top:411px;width:329px;height:70px;border:1px solid #7d8997;border-radius:3px;background:#f7f8fa"></div>
<div class="sws" style="left:889.0px;top:420px;background:#7b56db"></div>
<div class="sws" style="left:920.5px;top:420px;background:#2b99eb"></div>
<div class="sws" style="left:951.9px;top:420px;background:#45ccb0"></div>
<div class="sws" style="left:983.4px;top:420px;background:#dd9900"></div>
<div class="sws" style="left:1014.8px;top:420px;background:#f5647d"></div>
<div class="sws" style="left:1046.2px;top:420px;background:#cb2196"></div>
<div class="sws" style="left:1077.7px;top:420px;background:#813193"></div>
<div class="sws" style="left:1109.2px;top:420px;background:#0d51b5"></div>
<div class="sws" style="left:1140.6px;top:420px;background:#2a8c80"></div>
<div class="sws" style="left:1172.0px;top:420px;background:#99b100"></div>
<div class="sws" style="left:889.0px;top:448px;background:#f7a476"></div>
<div class="sws" style="left:920.5px;top:448px;background:#f76ace"></div>
<div class="sws" style="left:951.9px;top:448px;background:#ae8cff"></div>
<div class="sws" style="left:983.4px;top:448px;background:#1b689d"></div>
<div class="sws" style="left:1014.8px;top:448px;background:#13490a"></div>
<div class="sws" style="left:1046.2px;top:448px;background:#465d00"></div>
<div class="sws" style="left:1077.7px;top:448px;background:#9d6300"></div>
<div class="sws" style="left:1109.2px;top:448px;background:#f6540b"></div>
<div class="sws" style="left:1140.6px;top:448px;background:#fa969e"></div>
<div class="sws" style="left:1172.0px;top:448px;background:#e47bfe"></div>


<div class="lbl" id="l6" style="top:497px">Background color</div>
<div class="inp c" style="top:526px"><div class="sw" style="background:#fff;border-right:1px solid #7d8997"></div><div class="v">#ffffff</div></div>
<div class="abs" style="left:879px;top:572px;width:36px;height:18px;border-radius:9px;background:#2d9df3"></div>
<div class="abs" style="left:897px;top:572px;width:18px;height:18px;border:1px solid #6f7b88;border-radius:9px;background:#f7f8fa"></div>
<div class="lbl" id="l7" style="transform:scaleX(0.968);left:920px;top:574px">Show base layer</div>

<div class="lbl" id="l8" style="transform:scaleX(0.98);top:608px">Base layer tile server</div>
<div class="inp" style="top:637px"></div>
<div class="abs" style="left:879px;top:690px;width:18px;height:18px;border:1px solid #5c6773;border-radius:2px;background:#fff"></div>
<div class="lbl" id="l9" style="transform:scaleX(0.996);left:902px;top:692px">Independent corner radius</div>
<div class="lbl" id="l10" style="transform:scaleX(0.97);top:734px">Corner radius</div>
<div class="abs" style="left:879px;top:763px;width:329px;height:32px;border:1px solid #7d8997;border-radius:3px;background:#fff"></div>
<div class="abs" style="left:1188px;top:764px;width:19px;height:30px;border-left:1px solid #7d8997;background:#f7f8fa"></div>
<svg class="abs" style="left:1193px;top:768px" width="10" height="6" viewBox="0 0 10 6"><path d="M1.500 5L5 1.500 8.500 5" stroke="#3c444d" stroke-width="1.400" fill="none"/></svg>

<!-- mouse cursor -->
<svg class="abs" style="left:885.300px;top:343.500px" width="15.400" height="22" viewBox="0 0 14 20"><path d="M1.500 1.500v13.200l3.200-2.900 2.300 5.400 2.300-1-2.300-5.200h4.300z" fill="#111" stroke="#fff" stroke-width="1.100" stroke-linejoin="round"/></svg>

</div>
</body>
</html>
